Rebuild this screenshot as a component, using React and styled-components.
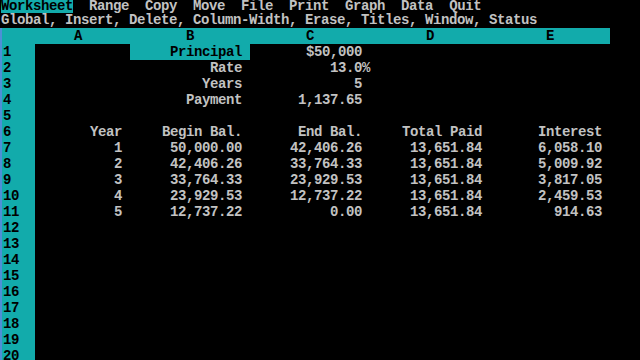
import React from "react"
import styled, { createGlobalStyle } from "styled-components"

// Lotus style text screen: 8px wide chars, 16px rows
const CHAR = 8
const ROW = 16

const GlobalStyle = createGlobalStyle`
  html, body {
    margin: 0;
    padding: 0;
    background: #000;
  }
`

const menu = ["Worksheet", "Range", "Copy", "Move", "File", "Print", "Graph", "Data", "Quit"]

const columns = [
  { name: "A", width: 12 },
  { name: "B", width: 15 },
  { name: "C", width: 15 },
  { name: "D", width: 15 },
  { name: "E", width: 15 },
]

// each row: array of cell values for A..E
const sheet = [
  ["", "Principal", "$50,000", "", ""],
  ["", "Rate", "13.0%", "", ""],
  ["", "Years", "5", "", ""],
  ["", "Payment", "1,137.65", "", ""],
  ["", "", "", "", ""],
  ["Year", "Begin Bal.", "End Bal.", "Total Paid", "Interest"],
  ["1", "50,000.00", "42,406.26", "13,651.84", "6,058.10"],
  ["2", "42,406.26", "33,764.33", "13,651.84", "5,009.92"],
  ["3", "33,764.33", "23,929.53", "13,651.84", "3,817.05"],
  ["4", "23,929.53", "12,737.22", "13,651.84", "2,459.53"],
  ["5", "12,737.22", "0.00", "13,651.84", "914.63"],
]

const TOTAL_ROWS = 20

const App = () => {
  return (
    <>
      <GlobalStyle />
      <Screen>
        <Panel>
          <MenuLine>
            {menu.map((item, i) => (
              <MenuItem key={item} $active={i === 0}>
                {item}
              </MenuItem>
            ))}
          </MenuLine>
          <PromptLine>Global, Insert, Delete, Column-Width, Erase, Titles, Window, Status</PromptLine>
        </Panel>

        <HeaderRow>
          <Gutter />
          {columns.map(col => (
            <ColHead key={col.name} $chars={col.width} $lead={Math.floor((col.width - 1) / 2)}>
              {col.name}
            </ColHead>
          ))}
        </HeaderRow>

        {Array.from({ length: TOTAL_ROWS }, (_, r) => {
          const values = sheet[r] || []
          return (
            <Row key={r}>
              <Gutter>{r + 1}</Gutter>
              {columns.map((col, c) => {
                const v = values[c] || ""
                return (
                  <Cell
                    key={col.name}
                    $chars={col.width}
                    $pointer={r === 0 && c === 1}
                    $flush={v.endsWith("%")}
                  >
                    {v}
                  </Cell>
                )
              })}
            </Row>
          )
        })}
      </Screen>
    </>
  )
}

const Screen = styled.div`
  width: 640px;
  height: 360px;
  overflow: hidden;
  background: #000;
  color: #c2c2c2;
  font-family: "Liberation Mono", "Courier New", monospace;
  font-size: 14px;
  letter-spacing: -0.4px;
  font-weight: bold;
  line-height: ${ROW}px;
  white-space: pre;
`

const Panel = styled.div`
  padding-left: 1px;
`

// top line of the screen is partly cropped
const MenuLine = styled.div`
  display: flex;
  gap: ${CHAR * 2}px;
  height: 13px;
  line-height: 13px;
`

const PromptLine = styled.div`
  height: 15px;
  line-height: 15px;
`

const MenuItem = styled.span`
  background: ${p => (p.$active ? "#12abab" : "transparent")};
  color: ${p => (p.$active ? "#000" : "inherit")};
`

const HeaderRow = styled.div`
  display: flex;
  height: ${ROW}px;
  color: #000;
`

const Row = styled.div`
  display: flex;
  height: ${ROW}px;
`

const Gutter = styled.div`
  width: ${CHAR * 4}px;
  flex: none;
  background: #12abab;
  border-left: 2px solid #4d8fd6;
  color: #000;
  padding-left: 1px;
  box-sizing: content-box;
  margin-right: -1px;
`

const ColHead = styled.div`
  width: ${p => p.$chars * CHAR}px;
  flex: none;
  background: #12abab;
  padding-left: ${p => p.$lead * CHAR}px;
  box-sizing: border-box;
`

const Cell = styled.div`
  width: ${p => p.$chars * CHAR}px;
  flex: none;
  box-sizing: border-box;
  text-align: right;
  padding-right: ${p => (p.$flush ? 0 : CHAR)}px;
  background: ${p => (p.$pointer ? "#12abab" : "transparent")};
  color: ${p => (p.$pointer ? "#000" : "inherit")};
`

export default App
